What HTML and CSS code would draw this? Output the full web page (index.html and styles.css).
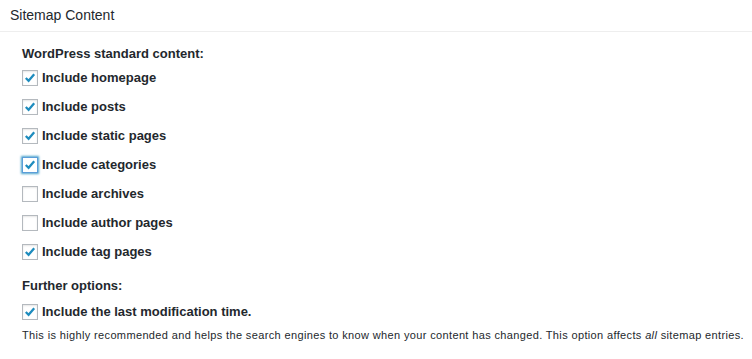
FILE: index.html
```html
<!DOCTYPE html>
<html>
<head>
<meta charset="utf-8">
<link rel="stylesheet" href="styles.css">
</head>
<body>
<div class="panel">
  <div class="panel-head">Sitemap Content</div>
  <div class="panel-body">
    <div class="group-title">WordPress standard content:</div>
    <ul class="opts">
      <li class="opt"><span class="cb checked"><svg viewBox="0 0 16 16"><path d="M3.2 8 L6.4 11.2 L12.8 3.8"/></svg></span><span class="lbl">Include homepage</span></li>
      <li class="opt"><span class="cb checked"><svg viewBox="0 0 16 16"><path d="M3.2 8 L6.4 11.2 L12.8 3.8"/></svg></span><span class="lbl">Include posts</span></li>
      <li class="opt"><span class="cb checked"><svg viewBox="0 0 16 16"><path d="M3.2 8 L6.4 11.2 L12.8 3.8"/></svg></span><span class="lbl">Include static pages</span></li>
      <li class="opt"><span class="cb checked focus"><svg viewBox="0 0 16 16"><path d="M3.2 8 L6.4 11.2 L12.8 3.8"/></svg></span><span class="lbl">Include categories</span></li>
      <li class="opt"><span class="cb"></span><span class="lbl">Include archives</span></li>
      <li class="opt"><span class="cb"></span><span class="lbl">Include author pages</span></li>
      <li class="opt"><span class="cb checked"><svg viewBox="0 0 16 16"><path d="M3.2 8 L6.4 11.2 L12.8 3.8"/></svg></span><span class="lbl">Include tag pages</span></li>
    </ul>
    <div class="group-title further">Further options:</div>
    <ul class="opts">
      <li class="opt"><span class="cb checked"><svg viewBox="0 0 16 16"><path d="M3.2 8 L6.4 11.2 L12.8 3.8"/></svg></span><span class="lbl">Include the last modification time.</span></li>
    </ul>
    <p class="desc">This is highly recommended and helps the search engines to know when your content has changed. This option affects <i>all</i> sitemap entries.</p>
  </div>
</div>
</body>
</html>
```
FILE: styles.css
```css
html, body {
  margin: 0;
  padding: 0;
  background: #fff;
}
body {
  font-family: "Liberation Sans", Arial, sans-serif;
  color: #23282d;
}
.panel-head {
  height: 32px;
  box-sizing: border-box;
  padding: 6px 10px 0;
  font-size: 14px;
  line-height: 18px;
  border-bottom: 1px solid #eeeeee;
}
.panel-body {
  padding: 13px 0 0 22px;
}
.group-title {
  font-size: 13px;
  font-weight: bold;
  line-height: 18px;
  height: 18px;
}
.further {
  margin-top: 11px;
  margin-bottom: 2px;
}
.opts {
  list-style: none;
  margin: 0;
  padding: 0;
}
.opt {
  display: flex;
  align-items: center;
  height: 29px;
}
.cb {
  width: 16px;
  height: 16px;
  box-sizing: border-box;
  border: 1px solid #b4b9be;
  background: #fff;
  box-shadow: inset 0 1px 2px rgba(0,0,0,.1);
  margin-right: 4px;
  flex: none;
  display: flex;
}
.cb svg {
  width: 14px;
  height: 14px;
}
.cb path {
  fill: none;
  stroke: #1e8cbe;
  stroke-width: 2.6;
}
.cb.focus {
  border-color: #5b9dd9;
  box-shadow: 0 0 2px 1px rgba(30,140,190,.8);
}
.lbl {
  font-size: 13px;
  font-weight: bold;
}
.desc {
  margin: 2px 0 0;
  font-size: 11px;
  line-height: 14px;
  letter-spacing: 0.36px;
  white-space: nowrap;
}
```
